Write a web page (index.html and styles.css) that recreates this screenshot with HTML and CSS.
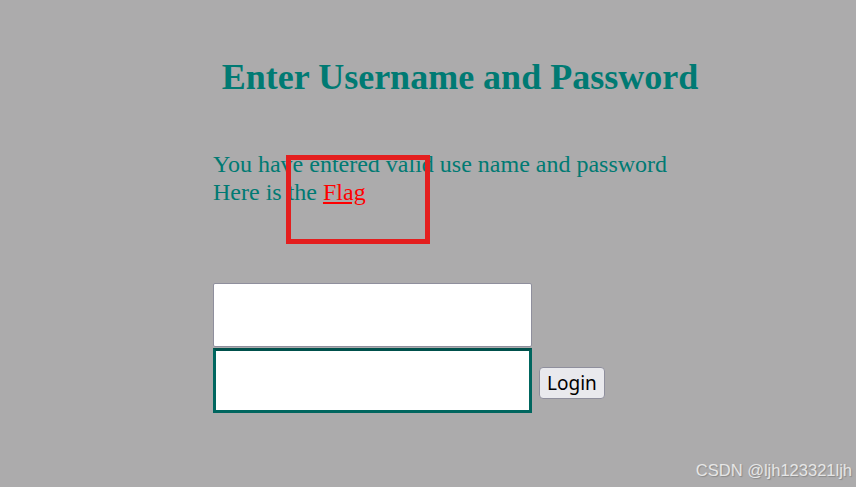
FILE: index.html
```html
<html>
    <head>
        <title>Login</title>
        <link rel="stylesheet" href="styles.css">
    </head>
    <body>
        <div class="main">
            <h1 class="title">Enter Username and Password</h1>

            <div class="message">
                <p>You have entered valid use name and password<br>
                Here is the <a href="#" class="flag">Flag</a></p>
                <div class="mark"></div>
            </div>

            <form class="login">
                <input type="text" class="field" name="username">
                <div class="row">
                    <input type="password" class="field active" name="password">
                    <button type="button" class="button">Login</button>
                </div>
            </form>
        </div>

        <div class="watermark">CSDN @ljh123321ljh</div>
    </body>
</html>
```

FILE: styles.css
```css
body {
    margin: 0;
    background-color: #acabac;
    font-family: "Liberation Serif", serif;
    color: #007a73;
    height: 487px;
    overflow: hidden;
    position: relative;
}

.main {
    margin-left: 213px;
    width: 494px;
    padding-top: 56px;
}

.title {
    font-size: 36px;
    font-weight: bold;
    text-align: center;
    margin: 0 0 0 0;
}

.message {
    position: relative;
    margin-top: 52px;
}

.message p {
    font-size: 24px;
    line-height: 28px;
    margin: 0;
}

.flag {
    color: #ff0000;
}

/* red highlight box drawn over the text */
.mark {
    position: absolute;
    left: 73px;
    top: 5px;
    width: 134px;
    height: 79px;
    border: 5px solid #e41e1e;
}

.login {
    margin-top: 77px;
}

.field {
    display: block;
    width: 319px;
    height: 64px;
    margin: 0;
    border: 1px solid #8f8f9d;
    border-radius: 2px;
    background: white;
    box-sizing: border-box;
}

.field.active {
    height: 65px;
    border: 3px solid #00665f;
    border-top-color: #00504b;
    border-radius: 0;
}

.row {
    display: flex;
    align-items: center;
    gap: 7px;
    margin-top: 1px;
}

.button {
    font-family: "Noto Sans", sans-serif;
    font-size: 19px;
    padding: 0 7px;
    height: 32px;
    margin-top: 4px;
    background-color: #e9e9ed;
    border: 1px solid #8f8f9d;
    border-radius: 4px;
    color: black;
}

.watermark {
    position: absolute;
    right: 4px;
    bottom: 7px;
    font-family: "Liberation Sans", sans-serif;
    font-size: 16.5px;
    color: #e6e6e6;
    text-shadow: 1px 1px 1px #8a8a8a;
}
```
